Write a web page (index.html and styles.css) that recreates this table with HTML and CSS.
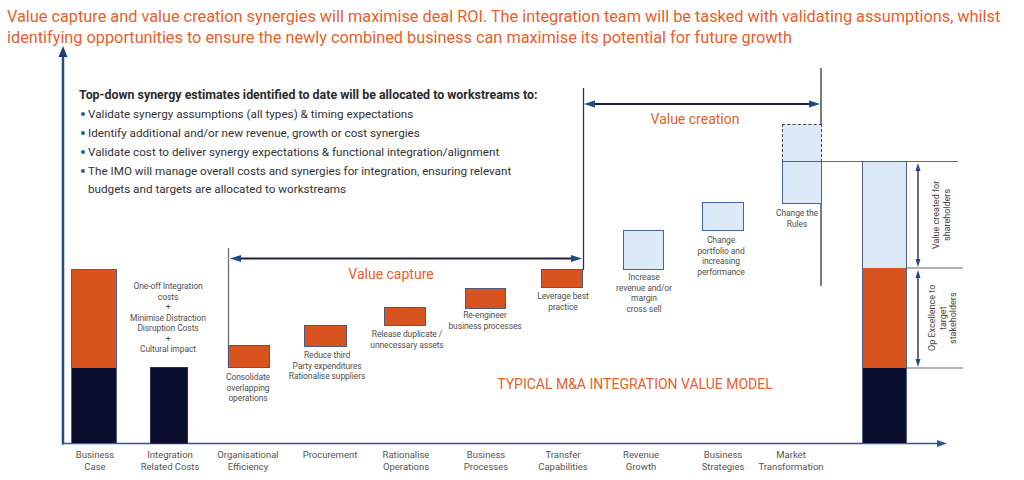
FILE: index.html
```html
<!DOCTYPE html>
<html lang="en">
<head>
<meta charset="utf-8">
<title>Typical M&amp;A Integration Value Model</title>
<link rel="stylesheet" href="styles.css">
</head>
<body>
<div class="page">
  <h1 class="title">Value capture and value creation synergies will maximise deal ROI. The integration team will be tasked with validating assumptions, whilst identifying opportunities to ensure the newly combined business can maximise its potential for future growth</h1>

  <svg class="lines" width="1024" height="480" viewBox="0 0 1024 480" aria-hidden="true">
    <!-- axes -->
    <line x1="63" y1="54" x2="63" y2="444.5" stroke="#27477F" stroke-width="2.5"/>
    <polygon points="63,46 58.5,57 67.5,57" fill="#1F3E78"/>
    <line x1="62" y1="443.5" x2="938" y2="443.5" stroke="#2E5597" stroke-width="1.5"/>
    <polygon points="947,443.5 937,440 937,447" fill="#2E5597"/>

    <!-- value capture guide + arrow -->
    <line x1="228.5" y1="248" x2="228.5" y2="368" stroke="#6b6b6b" stroke-width="1.3"/>
    <line x1="236" y1="258.5" x2="576" y2="258.5" stroke="#1c2236" stroke-width="2"/>
    <polygon points="230,258.5 241,255 241,262" fill="#1F4A8A"/>
    <polygon points="582,258.5 571,255 571,262" fill="#1F4A8A"/>

    <!-- value creation guides + arrow -->
    <line x1="583.5" y1="88" x2="583.5" y2="270" stroke="#333" stroke-width="1.3"/>
    <line x1="821" y1="68" x2="821" y2="286" stroke="#333" stroke-width="1.3"/>
    <line x1="590" y1="104" x2="814" y2="104" stroke="#1c2236" stroke-width="2"/>
    <polygon points="584,104 595,100.5 595,107.5" fill="#1F4A8A"/>
    <polygon points="820,104 809,100.5 809,107.5" fill="#1F4A8A"/>

    <!-- right bracket lines -->
    <line x1="821" y1="161.5" x2="958" y2="161.5" stroke="#666" stroke-width="1"/>
    <line x1="903" y1="268" x2="963" y2="268" stroke="#666" stroke-width="1"/>
    <line x1="903" y1="368" x2="963" y2="368" stroke="#666" stroke-width="1"/>

    <!-- dimension arrows -->
    <line x1="918" y1="168" x2="918" y2="262" stroke="#1c2236" stroke-width="1.3"/>
    <polygon points="918,163 915.5,171 920.5,171" fill="#1F4A8A"/>
    <polygon points="918,267 915.5,259 920.5,259" fill="#1F4A8A"/>
    <line x1="918" y1="275" x2="918" y2="362" stroke="#1c2236" stroke-width="1.3"/>
    <polygon points="918,270 915.5,278 920.5,278" fill="#1F4A8A"/>
    <polygon points="918,367 915.5,359 920.5,359" fill="#1F4A8A"/>
  </svg>

  <div class="intro">
    <p class="intro-head">Top-down synergy estimates identified to date will be allocated to workstreams to:</p>
    <ul class="intro-list">
      <li>Validate synergy assumptions (all types) &amp; timing expectations</li>
      <li>Identify additional and/or new revenue, growth or cost synergies</li>
      <li>Validate cost to deliver synergy expectations &amp; functional integration/alignment</li>
      <li>The IMO will manage overall costs and synergies for integration, ensuring relevant budgets and targets are allocated to workstreams</li>
    </ul>
  </div>

  <!-- bars -->
  <div class="bar bar-business">
    <div class="seg seg-orange"></div>
    <div class="seg seg-dark"></div>
  </div>
  <div class="bar bar-integration">
    <div class="seg seg-dark"></div>
  </div>
  <div class="bar bar-final">
    <div class="seg seg-light"></div>
    <div class="seg seg-orange"></div>
    <div class="seg seg-dark"></div>
  </div>

  <!-- step boxes -->
  <div class="box orange b1"></div>
  <div class="box orange b2"></div>
  <div class="box orange b3"></div>
  <div class="box orange b4"></div>
  <div class="box orange b5"></div>
  <div class="box light b6"></div>
  <div class="box light b7"></div>
  <div class="box dashed b8a"></div>
  <div class="box light b8"></div>

  <!-- small labels -->
  <div class="lbl l-int">One-off Integration<br>costs<br>+<br>Minimise Distraction<br>Disruption Costs<br>+<br>Cultural impact</div>
  <div class="lbl l1">Consolidate<br>overlapping<br>operations</div>
  <div class="lbl l2">Reduce third<br>Party expenditures<br>Rationalise suppliers</div>
  <div class="lbl l3">Release duplicate /<br>unnecessary assets</div>
  <div class="lbl l4">Re-engineer<br>business processes</div>
  <div class="lbl l5">Leverage best<br>practice</div>
  <div class="lbl l6">Increase<br>revenue and/or<br>margin<br>cross sell</div>
  <div class="lbl l7">Change<br>portfolio and<br>increasing<br>performance</div>
  <div class="lbl l8">Change the<br>Rules</div>

  <div class="accent cap">Value capture</div>
  <div class="accent cre">Value creation</div>
  <div class="accent model">TYPICAL M&amp;A INTEGRATION VALUE MODEL</div>

  <div class="vlabel v1">Value created for<br>shareholders</div>
  <div class="vlabel v2">Op Excellence to<br>target<br>stakeholders</div>

  <!-- x-axis categories -->
  <div class="axis">
    <span class="cat c1">Business<br>Case</span>
    <span class="cat c2">Integration<br>Related Costs</span>
    <span class="cat c3">Organisational<br>Efficiency</span>
    <span class="cat c4">Procurement</span>
    <span class="cat c5">Rationalise<br>Operations</span>
    <span class="cat c6">Business<br>Processes</span>
    <span class="cat c7">Transfer<br>Capabilities</span>
    <span class="cat c8">Revenue<br>Growth</span>
    <span class="cat c9">Business<br>Strategies</span>
    <span class="cat c10">Market<br>Transformation</span>
  </div>
</div>
</body>
</html>
```

FILE: styles.css
```css
* { box-sizing: border-box; }

html, body {
  margin: 0;
  padding: 0;
  background: #ffffff;
}

body {
  font-family: Roboto, "Liberation Sans", sans-serif;
  color: #333;
}

.page {
  position: relative;
  width: 1024px;
  height: 480px;
  overflow: hidden;
}

.title {
  margin: 0;
  padding: 6px 0 0 7px;
  font-size: 16.3px;
  font-weight: 400;
  line-height: 21px;
  color: #E4622E;
}

.lines {
  position: absolute;
  left: 0;
  top: 0;
}

/* intro text */
.intro {
  position: absolute;
  left: 79px;
  top: 85px;
  width: 470px;
  color: #333;
}

.intro-head {
  margin: 0;
  font-size: 12.4px;
  font-weight: 700;
  line-height: 19px;
  color: #2b2b2b;
  white-space: nowrap;
}

.intro-list {
  margin: 0;
  padding: 0;
  list-style: none;
}

.intro-list li {
  position: relative;
  padding-left: 9px;
  margin-top: 1px;
  font-size: 11.7px;
  line-height: 18px;
}

.intro-list li::before {
  content: "";
  position: absolute;
  left: 2px;
  top: 6.5px;
  width: 4px;
  height: 4px;
  border-radius: 50%;
  background: #1E6B86;
}

/* bars */
.bar {
  position: absolute;
  display: flex;
  flex-direction: column;
  border: 1px solid #4A5F8C;
}

.seg-orange { background: #D9531F; }
.seg-dark { background: #0C0E2D; }
.seg-light { background: #DCE9F7; }

.bar-business { left: 71px; top: 269px; width: 46px; height: 175px; }
.bar-business .seg-orange { height: 98px; }
.bar-business .seg-dark { flex: 1; }

.bar-integration { left: 150px; top: 367px; width: 38px; height: 77px; border-color: #2a2f4a; }
.bar-integration .seg-dark { flex: 1; }

.bar-final { left: 862px; top: 161px; width: 45px; height: 283px; }
.bar-final .seg-light { height: 106px; }
.bar-final .seg-orange { height: 100px; }
.bar-final .seg-dark { flex: 1; }

/* step boxes */
.box {
  position: absolute;
  border: 1.5px solid #4B5A7E;
}

.box.orange { background: #D9531F; }
.box.light { background: #DCE9F7; border-color: #44639A; }
.box.dashed {
  background: #DCE9F7;
  border: 1.5px dashed #444;
  border-bottom: none;
}

.b1 { left: 228px; top: 345px; width: 42px; height: 23px; }
.b2 { left: 304px; top: 325px; width: 43px; height: 22px; }
.b3 { left: 384px; top: 307px; width: 42px; height: 19px; }
.b4 { left: 465px; top: 288px; width: 41px; height: 21px; }
.b5 { left: 541px; top: 269px; width: 42px; height: 19px; }
.b6 { left: 623px; top: 230px; width: 41px; height: 40px; }
.b7 { left: 702px; top: 202px; width: 42px; height: 29px; }
.b8a { left: 782px; top: 124px; width: 40px; height: 38px; }
.b8 { left: 782px; top: 161px; width: 40px; height: 43px; }

/* small labels */
.lbl {
  position: absolute;
  width: 120px;
  margin-left: -60px;
  text-align: center;
  font-size: 8.5px;
  line-height: 10.5px;
  color: #505050;
  letter-spacing: -0.1px;
}

.l-int { left: 168px; top: 281px; }
.l1 { left: 248px; top: 372px; }
.l2 { left: 327px; top: 350px; }
.l3 { left: 407px; top: 329px; }
.l4 { left: 485px; top: 310px; }
.l5 { left: 563px; top: 291px; }
.l6 { left: 644px; top: 272px; }
.l7 { left: 721px; top: 235px; }
.l8 { left: 797px; top: 208px; }

/* orange accents */
.accent {
  position: absolute;
  color: #E4622E;
  white-space: nowrap;
  text-align: center;
}

.cap { left: 331px; top: 265px; width: 120px; font-size: 14px; line-height: 18px; }
.cre { left: 635px; top: 110px; width: 120px; font-size: 14px; line-height: 18px; }
.model { left: 435px; top: 375px; width: 400px; font-size: 14px; line-height: 18px; }

/* rotated labels */
.vlabel {
  position: absolute;
  writing-mode: vertical-rl;
  transform: rotate(180deg);
  text-align: center;
  font-size: 9px;
  line-height: 10.5px;
  color: #444;
}

.v1 { left: 931px; top: 162px; height: 106px; }
.v2 { left: 927px; top: 268px; height: 100px; }

/* x-axis categories */
.axis {
  position: absolute;
  left: 0;
  top: 449px;
  width: 1024px;
  height: 26px;
}

.cat {
  position: absolute;
  top: 0;
  width: 100px;
  margin-left: -50px;
  text-align: center;
  font-size: 9.5px;
  line-height: 12px;
  color: #555;
}

.c1 { left: 95px; }
.c2 { left: 170px; }
.c3 { left: 248px; }
.c4 { left: 330px; }
.c5 { left: 406px; }
.c6 { left: 486px; }
.c7 { left: 563px; }
.c8 { left: 641px; }
.c9 { left: 723px; }
.c10 { left: 791px; }
```
